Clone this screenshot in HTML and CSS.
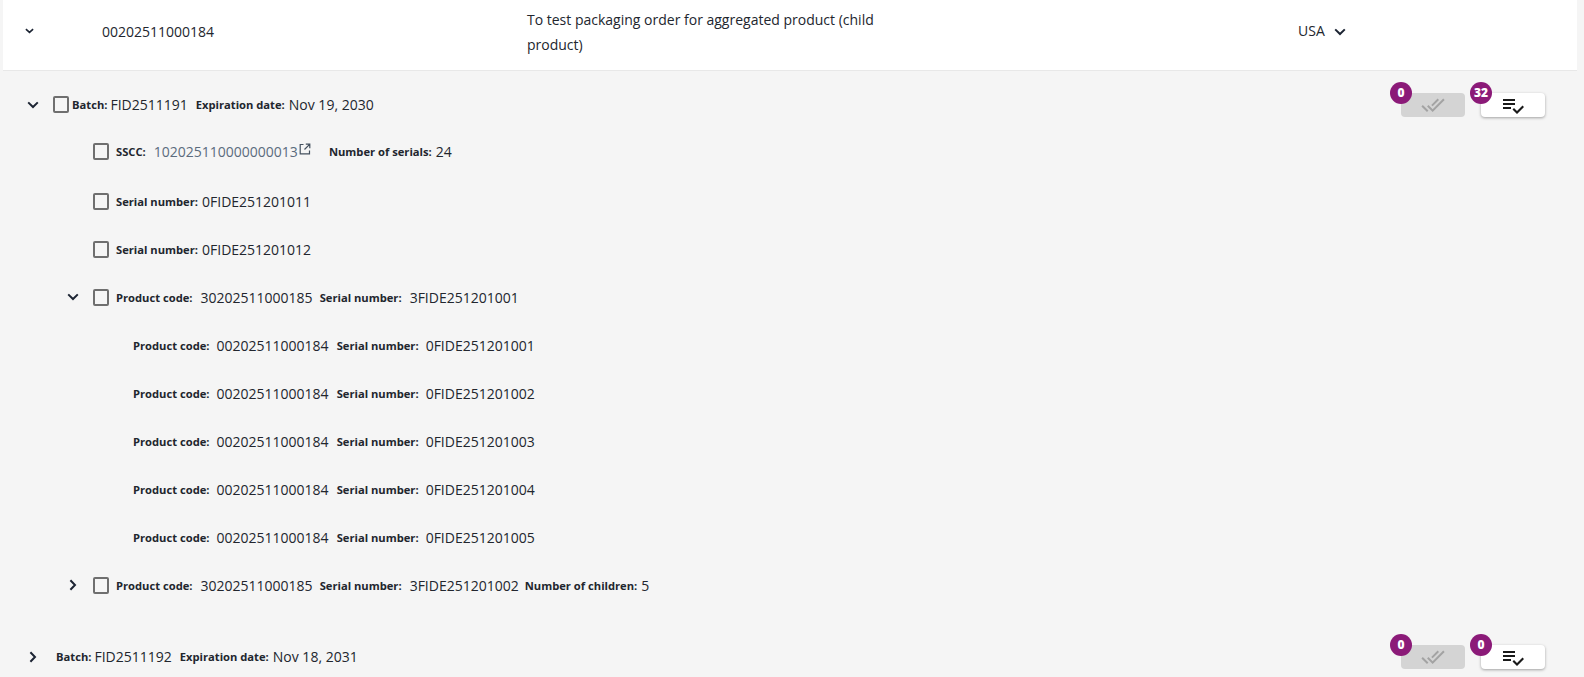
FILE: index.html
```html
<!DOCTYPE html>
<html lang="en">
<head>
  <meta charset="UTF-8">
  <meta name="viewport" content="width=device-width, initial-scale=1.0">
  <title>Packaging order</title>
  <link rel="stylesheet" href="styles.css">
</head>
<body>
<div class="page">
  <div class="order-row">
    <svg class="chevron-small" viewBox="0 0 10 6"><path d="M1 1l4 3.6L9 1"/></svg>
    <span class="order-code">00202511000184</span>
    <span class="order-name">To test packaging order for aggregated product (child product)</span>
    <span class="order-country">USA</span>
    <svg class="chevron chevron-country" viewBox="0 0 12 8"><path d="M1.2 1.4L6 6l4.8-4.6"/></svg>
  </div>

  <div class="panel">
    <div class="tree-row batch-row">
      <svg class="chevron" viewBox="0 0 12 8"><path d="M1.2 1.4L6 6l4.8-4.6"/></svg>
      <span class="checkbox"></span>
      <span class="label">Batch:</span><span class="value">FID2511191</span>
      <span class="label label-gap">Expiration date:</span><span class="value">Nov 19, 2030</span>
      <div class="actions">
        <div class="action">
          <span class="badge">0</span>
          <button class="action-button" disabled>
            <svg viewBox="0 0 24 24"><path d="M18 7l-1.41-1.41-6.34 6.34 1.41 1.41L18 7zm4.24-1.41L11.66 16.17 7.48 12l-1.41 1.41L11.66 19l12-12-1.42-1.41zM.41 13.41L6 19l1.41-1.41L1.83 12 .41 13.41z"/></svg>
          </button>
        </div>
        <div class="action">
          <span class="badge">32</span>
          <button class="action-button">
            <svg viewBox="0 0 24 24"><path d="M14 10H2v2h12v-2zm0-4H2v2h12V6zM2 16h8v-2H2v2zm19.5-3.5L23 14l-6.99 7-4.51-4.5L13 15l3.01 3 5.49-5.5z"/></svg>
          </button>
        </div>
      </div>
    </div>

    <div class="tree-row level-1">
      <span class="checkbox"></span>
      <span class="label sscc-label">SSCC:</span><a class="value link">102025110000000013</a>
      <svg class="open-icon" viewBox="0 0 12 12"><path d="M4.500 1.500H1.200v9.300h9.300V7.500M6.800 1.200h4v4M10.600 1.400L5.500 6.500"/></svg>
      <span class="label serials-label">Number of serials:</span><span class="value value-tight">24</span>
    </div>
    <div class="tree-row level-1 serial-first">
      <span class="checkbox"></span>
      <span class="label">Serial number:</span><span class="value value-tight">0FIDE251201011</span>
    </div>
    <div class="tree-row level-1">
      <span class="checkbox"></span>
      <span class="label">Serial number:</span><span class="value value-tight">0FIDE251201012</span>
    </div>

    <div class="tree-row level-1 has-toggle">
      <svg class="chevron" viewBox="0 0 12 8"><path d="M1.2 1.4L6 6l4.8-4.6"/></svg>
      <span class="checkbox"></span>
      <span class="label">Product code:</span><span class="value">30202511000185</span>
      <span class="label label-gap">Serial number:</span><span class="value">3FIDE251201001</span>
    </div>
    <div class="tree-row level-2">
      <span class="label">Product code:</span><span class="value">00202511000184</span>
      <span class="label label-gap">Serial number:</span><span class="value">0FIDE251201001</span>
    </div>
    <div class="tree-row level-2">
      <span class="label">Product code:</span><span class="value">00202511000184</span>
      <span class="label label-gap">Serial number:</span><span class="value">0FIDE251201002</span>
    </div>
    <div class="tree-row level-2">
      <span class="label">Product code:</span><span class="value">00202511000184</span>
      <span class="label label-gap">Serial number:</span><span class="value">0FIDE251201003</span>
    </div>
    <div class="tree-row level-2">
      <span class="label">Product code:</span><span class="value">00202511000184</span>
      <span class="label label-gap">Serial number:</span><span class="value">0FIDE251201004</span>
    </div>
    <div class="tree-row level-2">
      <span class="label">Product code:</span><span class="value">00202511000184</span>
      <span class="label label-gap">Serial number:</span><span class="value">0FIDE251201005</span>
    </div>
    <div class="tree-row level-1 has-toggle">
      <svg class="chevron chevron-right" viewBox="0 0 12 8"><path d="M1.2 1.4L6 6l4.8-4.6"/></svg>
      <span class="checkbox"></span>
      <span class="label">Product code:</span><span class="value">30202511000185</span>
      <span class="label label-gap">Serial number:</span><span class="value">3FIDE251201002</span>
      <span class="label label-gap children-label">Number of children:</span><span class="value value-tight">5</span>
    </div>

    <div class="tree-row batch-row batch-closed">
      <svg class="chevron chevron-right" viewBox="0 0 12 8"><path d="M1.2 1.4L6 6l4.8-4.6"/></svg>
      <span class="label">Batch:</span><span class="value">FID2511192</span>
      <span class="label label-gap">Expiration date:</span><span class="value">Nov 18, 2031</span>
      <div class="actions">
        <div class="action">
          <span class="badge">0</span>
          <button class="action-button" disabled>
            <svg viewBox="0 0 24 24"><path d="M18 7l-1.41-1.41-6.34 6.34 1.41 1.41L18 7zm4.24-1.41L11.66 16.17 7.48 12l-1.41 1.41L11.66 19l12-12-1.42-1.41zM.41 13.41L6 19l1.41-1.41L1.83 12 .41 13.41z"/></svg>
          </button>
        </div>
        <div class="action">
          <span class="badge">0</span>
          <button class="action-button">
            <svg viewBox="0 0 24 24"><path d="M14 10H2v2h12v-2zm0-4H2v2h12V6zM2 16h8v-2H2v2zm19.5-3.5L23 14l-6.99 7-4.51-4.5L13 15l3.01 3 5.49-5.5z"/></svg>
          </button>
        </div>
      </div>
    </div>
  </div>
</div>
</body>
</html>
```

FILE: styles.css
```css
html,
body {
  margin: 0;
  padding: 0;
}
body {
  font-family: "Open Sans", "Liberation Sans", sans-serif;
  font-size: 14px;
  color: #22262e;
  background-color: #f5f5f5;
}
.page {
  height: 100vh;
  overflow: hidden;
  padding: 0 7px 0 3px;
  box-sizing: border-box;
}
.order-row {
  display: flex;
  align-items: center;
  height: 71px;
  padding-bottom: 7px;
  box-sizing: border-box;
  background-color: #fff;
  border-bottom: 1px solid #e8e8e8;
}
.chevron-small {
  width: 9px;
  height: 6px;
  margin: 0 0 2px 22px;
  fill: none;
  stroke: #1c2433;
  stroke-width: 1.8;
}
.order-code {
  margin-left: 68px;
  width: 425px;
}
.order-name {
  width: 370px;
  line-height: 25px;
}
.order-country {
  margin-left: 401px;
  margin-bottom: 3px;
}
.chevron {
  flex: none;
  width: 12px;
  height: 8px;
  fill: none;
  stroke: #1c2433;
  stroke-width: 2;
}
.chevron-country {
  margin: 0 0 0 9px;
}
.chevron-right {
  transform: rotate(-90deg);
}
.panel {
  padding-top: 11px;
}
.tree-row {
  display: flex;
  align-items: center;
  height: 48px;
}
.batch-row {
  height: 45px;
  padding-left: 24px;
}
.batch-row .checkbox {
  margin-left: 14px;
  margin-right: 3px;
}
.batch-row .label {
  margin-right: 3px;
}
.batch-row .label-gap {
  margin-left: 8px;
  margin-right: 4px;
}
.batch-closed {
  margin-top: 24px;
  padding-top: 1px;
}
.batch-closed > .label:first-of-type {
  margin-left: 17px;
}
.level-1 {
  padding-left: 90px;
}
.level-1 .checkbox {
  margin-right: 7px;
}
.serial-first {
  margin-top: 2px;
}
.has-toggle {
  padding-left: 64px;
}
.has-toggle .checkbox {
  margin-left: 14px;
}
.has-toggle .label {
  margin-right: 8px;
}
.has-toggle .children-label {
  margin-left: 6px;
  margin-right: 7px;
}
.level-2 {
  padding-left: 130px;
}
.level-2 .label-gap {
  margin-left: 8px;
}
.checkbox {
  flex: none;
  width: 12px;
  height: 13px;
  border: 2px solid #6f6f6f;
  border-radius: 2px;
}
.label {
  font-size: 11.2px;
  font-weight: 700;
  margin-right: 7px;
}
.sscc-label {
  margin-right: 8px;
}
.label-gap {
  margin-left: 7px;
}
.value-tight {
  margin-left: -3px;
}
.value {
  font-size: 14px;
}
.link {
  color: #5b6b7d;
}
.open-icon {
  width: 12px;
  height: 12px;
  margin: 0 0 4px 1px;
  fill: none;
  stroke: #44505e;
  stroke-width: 1.2;
}
.serials-label {
  margin-left: 18px;
}
.actions {
  display: flex;
  gap: 16px;
  margin-left: auto;
  margin-right: 32px;
}
.action {
  position: relative;
}
.badge {
  position: absolute;
  left: -11px;
  top: -11px;
  width: 22px;
  height: 22px;
  border-radius: 50%;
  background-color: #8b1a78;
  color: #fff;
  font-size: 12px;
  font-weight: 800;
  line-height: 21px;
  text-align: center;
}
.action-button {
  display: flex;
  align-items: center;
  justify-content: center;
  width: 64px;
  height: 24px;
  padding: 0;
  border: none;
  border-radius: 4px;
  background-color: #fff;
  box-shadow: 0 1px 3px rgba(0, 0, 0, 0.35);
}
.action-button svg {
  width: 24px;
  height: 24px;
  fill: #1a1a1a;
}
.action-button:disabled {
  background-color: #d4d4d4;
  box-shadow: none;
}
.action-button:disabled svg {
  fill: #a3a3a3;
}
```
